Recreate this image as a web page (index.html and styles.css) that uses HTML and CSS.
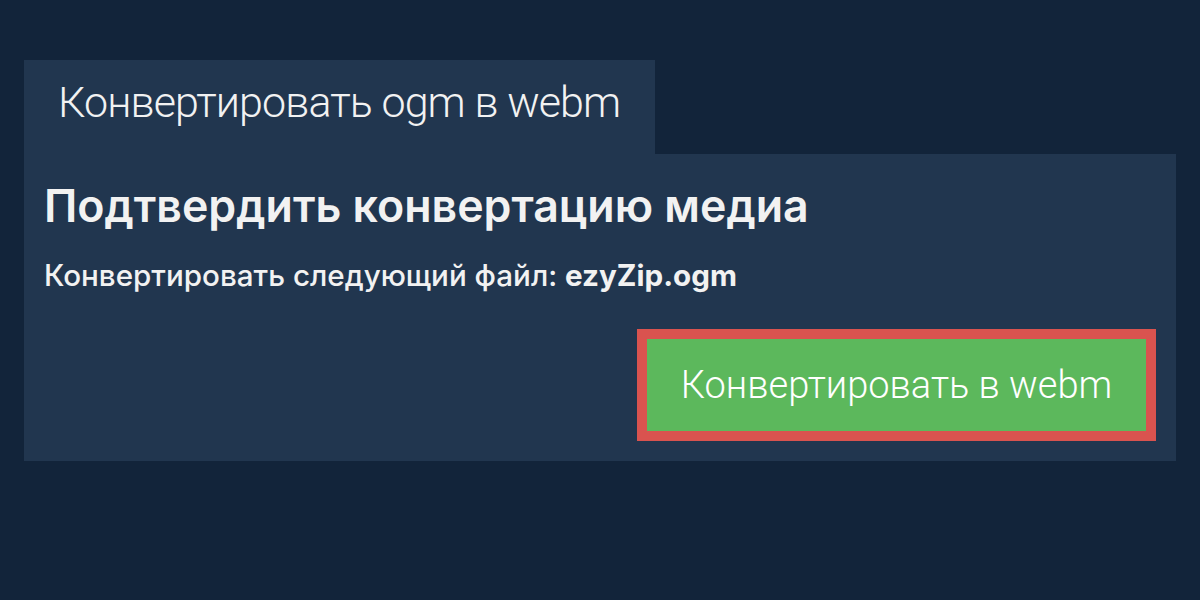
FILE: index.html
```html
<!DOCTYPE html>
<html lang="ru">
<head>
<meta charset="utf-8">
<link rel="stylesheet" href="styles.css">
</head>
<body>
<div class="wrap">
  <div class="tab">Конвертировать ogm в webm</div>
  <div class="panel">
    <h1 class="title">Подтвердить конвертацию медиа</h1>
    <p class="desc">Конвертировать следующий файл: <b>ezyZip.ogm</b></p>
    <div class="actions">
      <button class="btn">Конвертировать в webm</button>
    </div>
  </div>
</div>
</body>
</html>
```

FILE: styles.css
```css
html, body {
  margin: 0;
  padding: 0;
  background: #12243a;
  width: 1200px;
  height: 600px;
  overflow: hidden;
  font-family: Inter, "Noto Sans", sans-serif;
  color: #f2f2f2;
}
.wrap {
  padding: 60px 24px 0 24px;
  display: flex;
  flex-direction: column;
  align-items: flex-start;
}
.tab {
  background: #21364f;
  height: 94px;
  width: 631px;
  box-sizing: border-box;
  padding: 17px 0 0 34px;
  font-family: Roboto, "Noto Sans", sans-serif;
  font-size: 43px;
  line-height: 50px;
  font-weight: 300;
  letter-spacing: -0.9px;
  white-space: nowrap;
}
.panel {
  align-self: stretch;
  background: #21364f;
  height: 307px;
  box-sizing: border-box;
  padding: 26px 20px 20px 20px;
  display: flex;
  flex-direction: column;
}
.title {
  margin: 0;
  font-size: 44.7px;
  font-weight: 600;
  line-height: 53px;
  white-space: nowrap;
}
.desc {
  margin: 24px 0 0 0;
  font-size: 29.6px;
  font-weight: 500;
  line-height: 36px;
  white-space: nowrap;
}
.desc b { font-weight: 700; }
.actions {
  margin-top: auto;
  display: flex;
  justify-content: flex-end;
}
.btn {
  width: 519px;
  height: 112px;
  box-sizing: border-box;
  border: 10px solid #d9534f;
  background: #5cb85c;
  color: #ffffff;
  font-family: Roboto, "Noto Sans", sans-serif;
  font-size: 38px;
  font-weight: 300;
  padding: 0;
}
```
